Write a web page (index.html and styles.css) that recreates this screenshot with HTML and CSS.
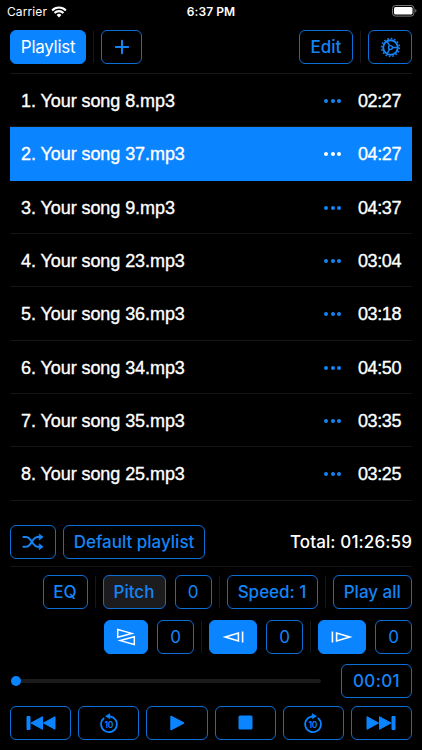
FILE: index.html
```html
<!DOCTYPE html>
<html lang="en">
<head>
<meta charset="utf-8">
<meta name="viewport" content="width=device-width, initial-scale=1">
<title>Playlist</title>
<link rel="stylesheet" href="styles.css">
</head>
<body>
<main class="app">
  <header class="status">
    <span class="carrier">Carrier
      <svg class="wifi" width="16" height="12" viewBox="0 0 16 12" fill="none" stroke="#fff" stroke-width="2.1"><path d="M1.1 4.4a9.8 9.8 0 0 1 13.8 0M3.5 7a6.4 6.4 0 0 1 9 0"/><path d="M8 11.4 5.6 8.9a3.5 3.5 0 0 1 4.8 0z" fill="#fff" stroke="none"/></svg>
    </span>
    <span class="clock">6:37 PM</span>
    <svg class="battery" width="25" height="12" viewBox="0 0 25 12"><rect x=".5" y=".5" width="21.5" height="10.6" rx="3" fill="none" stroke="#777"/><rect x="2" y="2" width="18.5" height="7.6" rx="1.6" fill="#fff"/><path d="M23.2 4.1v3.4q1.3-.5 1.3-1.7t-1.3-1.7z" fill="#777"/></svg>
  </header>

  <nav class="toolbar">
    <button class="btn solid w-playlist">Playlist</button>
    <i class="sep"></i>
    <button class="btn w-add" aria-label="Add"><svg width="16" height="16" viewBox="0 0 16 16" fill="none" stroke="currentColor" stroke-width="2" stroke-linecap="round"><path d="M8 1.800v12.400M1.800 8h12.400"/></svg></button>
    <span class="grow"></span>
    <button class="btn w-edit">Edit</button>
    <i class="sep"></i>
    <button class="btn w-gear" aria-label="Settings"><svg width="21" height="21" viewBox="0 0 21 21" fill="none" stroke="currentColor"><circle cx="10.500" cy="10.500" r="7.300" stroke-width="1.900"/><circle cx="10.500" cy="10.500" r="8.900" stroke-width="1.500" stroke-dasharray="1.600 1.895"/><circle cx="10.500" cy="10.500" r="1.900" stroke-width="1.400"/><path d="M12.500 10.500h5.300M9.500 8.700 6.900 4.200M9.500 12.300l-2.600 4.500" stroke-width="1.500"/></svg></button>
  </nav>

  <ul class="songs">
    <li><span class="name">1. Your song 8.mp3</span><span class="dots"><i></i><i></i><i></i></span><time>02:27</time></li>
    <li class="current"><span class="name">2. Your song 37.mp3</span><span class="dots"><i></i><i></i><i></i></span><time>04:27</time></li>
    <li><span class="name">3. Your song 9.mp3</span><span class="dots"><i></i><i></i><i></i></span><time>04:37</time></li>
    <li><span class="name">4. Your song 23.mp3</span><span class="dots"><i></i><i></i><i></i></span><time>03:04</time></li>
    <li><span class="name">5. Your song 36.mp3</span><span class="dots"><i></i><i></i><i></i></span><time>03:18</time></li>
    <li><span class="name">6. Your song 34.mp3</span><span class="dots"><i></i><i></i><i></i></span><time>04:50</time></li>
    <li><span class="name">7. Your song 35.mp3</span><span class="dots"><i></i><i></i><i></i></span><time>03:35</time></li>
    <li><span class="name">8. Your song 25.mp3</span><span class="dots"><i></i><i></i><i></i></span><time>03:25</time></li>
  </ul>

  <section class="summary">
    <button class="btn w-shuffle" aria-label="Shuffle"><svg width="22" height="18" viewBox="0 0 22 18" fill="none" stroke="currentColor" stroke-width="2" stroke-linecap="round" stroke-linejoin="round"><path d="M1.4 4h2.8c1.8 0 2.8.8 3.9 2.300l3.500 5c1.100 1.500 2.100 2.500 3.900 2.500h2M1.400 13.800h2.800c1.800 0 2.800-1 3.900-2.500l3.500-5C12.700 4.800 13.700 4 15.500 4h2"/><path d="m17.500 1.300 3.500 2.700-3.500 2.700zM17.500 11.100l3.500 2.700-3.500 2.700z" fill="currentColor" stroke-width=".8"/></svg></button>
    <button class="btn w-default">Default playlist</button>
    <span class="total">Total: 01:26:59</span>
  </section>

  <section class="modes">
    <button class="btn w-eq">EQ</button>
    <i class="sep"></i>
    <button class="btn w-pitch dim">Pitch</button>
    <button class="btn num">0</button>
    <i class="sep"></i>
    <button class="btn w-speed">Speed: 1</button>
    <i class="sep"></i>
    <button class="btn w-all">Play all</button>
  </section>

  <section class="fades">
    <button class="btn solid w-cross" aria-label="Crossfade"><svg width="20" height="20" viewBox="0 0 20 20" fill="none" stroke="#fff" stroke-width="1.500"><path d="M1.700 2.500v7.800L15.800 6.400zM18.300 9.700v7.800L4.200 13.600z"/></svg></button>
    <button class="btn num">0</button>
    <i class="sep"></i>
    <button class="btn solid w-fade" aria-label="Fade in"><svg width="24" height="12" viewBox="0 0 24 12" fill="none" stroke="#fff" stroke-width="1.600"><path d="M4.200 6l13.200-3.900v7.800zM21.600.500v11"/></svg></button>
    <button class="btn num">0</button>
    <i class="sep"></i>
    <button class="btn solid w-fade" aria-label="Fade out"><svg width="24" height="12" viewBox="0 0 24 12" fill="none" stroke="#fff" stroke-width="1.600"><path d="M19.800 6 6.600 2.100v7.800zM2.400.500v11"/></svg></button>
    <button class="btn num">0</button>
  </section>

  <section class="progress">
    <div class="track"><span class="knob"></span></div>
    <button class="btn w-time">00:01</button>
  </section>

  <footer class="controls">
    <button class="btn" aria-label="Previous"><svg width="30" height="16" viewBox="0 0 30 16" fill="currentColor" stroke="currentColor" stroke-linejoin="round"><path d="M1 1.500h3v13H1zM5 8l11.500-6.300v12.600zM17.500 8 29 1.700v12.600z"/></svg></button>
    <button class="btn" aria-label="Back 10 seconds"><svg width="20" height="22" viewBox="0 0 20 22" fill="none" stroke="currentColor"><path d="M10 4.300A7.900 7.900 0 1 1 4.700 6.300" stroke-width="1.700" stroke-linecap="round"/><path d="M10.800 1.600v5.200L6.500 4.200z" fill="currentColor" stroke-width=".500" stroke-linejoin="round"/><text x="9.800" y="15.500" class="ten">10</text></svg></button>
    <button class="btn" aria-label="Play"><svg width="16" height="16" viewBox="0 0 16 16" fill="currentColor" stroke="currentColor" stroke-width="1.500" stroke-linejoin="round"><path d="M2 1.500v13L14.500 8z"/></svg></button>
    <button class="btn" aria-label="Stop"><svg width="15" height="15" viewBox="0 0 15 15" fill="currentColor"><rect x=".5" y=".5" width="14" height="14" rx="1.500"/></svg></button>
    <button class="btn" aria-label="Forward 10 seconds"><svg width="20" height="22" viewBox="0 0 20 22" fill="none" stroke="currentColor"><path d="M10 4.300A7.900 7.900 0 1 0 15.300 6.300" stroke-width="1.700" stroke-linecap="round"/><path d="M9.200 1.600v5.200l4.300-2.600z" fill="currentColor" stroke-width=".500" stroke-linejoin="round"/><text x="9.800" y="15.500" class="ten">10</text></svg></button>
    <button class="btn" aria-label="Next"><svg width="30" height="16" viewBox="0 0 30 16" fill="currentColor" stroke="currentColor" stroke-linejoin="round"><path d="M26 1.500h3v13h-3zM25 8 13.500 1.700v12.600zM12.500 8 1 1.700v12.600z"/></svg></button>
  </footer>
</main>
</body>
</html>
```
FILE: styles.css
```css
* { box-sizing: border-box; }
body { margin: 0; background: #000; color: #fff; font-family: Inter, sans-serif; }
.app { width: 422px; height: 750px; padding: 0 10px; overflow: hidden; }
svg { display: block; flex: none; }

.status { height: 30px; margin: 0 -3px; padding-top: 1px; display: grid; grid-template-columns: 1fr auto 1fr; align-items: start; font-size: 12px; line-height: 21px; }
.carrier { display: flex; align-items: center; gap: 4px; letter-spacing: .1px; }
.clock { font-weight: 600; letter-spacing: .1px; }
.battery { justify-self: end; margin: 4px -2px 0 0; }

.btn { height: 34px; flex: none; padding: 0; display: flex; align-items: center; justify-content: center; border: 1px solid #0b6fd6; border-radius: 6px; background: #000; color: #1684f5; font: 500 17px Inter, sans-serif; white-space: nowrap; }
.solid { background: #0a84ff; border-color: #0a84ff; color: #fff; }
.dim { background: #1c1c1e; }
.sep { width: 1px; height: 32px; flex: none; background: #17171a; }
.grow { flex: 1; }

.toolbar { height: 43px; display: flex; align-items: flex-start; gap: 7px; }
.toolbar .sep { margin-top: 1px; }
.w-playlist { width: 76px; font-weight: 400; letter-spacing: -.3px; }
.w-add { width: 41px; }
.w-edit { width: 54px; }
.w-gear { width: 44px; }

.songs { list-style: none; height: 427.500px; margin: 0; padding: 0; border-top: 1px solid #171719; display: grid; grid-template-rows: repeat(8, 1fr); }
.songs li { display: flex; align-items: center; padding: 3px 11px 0; border-bottom: 1px solid #151517; font: 18px "Liberation Sans", sans-serif; -webkit-text-stroke: .35px #fff; }
.songs .current { background: #0a84ff; border-color: #0a84ff; }
.name { flex: 1; letter-spacing: -.07px; }
.songs time { letter-spacing: -.4px; }
.dots { display: flex; gap: 2.400px; margin: -1px 17px 0 0; }
.dots i { width: 4px; height: 4px; border-radius: 50%; background: #1684f5; }
.current .dots i { background: #fff; }

.summary { height: 66px; padding-top: 24px; display: flex; gap: 7px; border-bottom: 1px solid #151517; }
.w-shuffle { width: 46px; }
.w-default { width: 142px; }
.total { margin-left: auto; line-height: 34px; font-size: 17px; font-weight: 500; letter-spacing: .12px; }

.modes, .fades { display: flex; align-items: center; justify-content: flex-end; gap: 7px; }
.modes { height: 34px; margin-top: 8px; }
.w-eq { width: 45px; }
.w-pitch { width: 63px; margin-right: 2px; }
.num { width: 37px; font-weight: 400; }
.w-speed { width: 91px; }
.w-all { width: 79.500px; }

.fades { height: 34px; margin-top: 11px; }
.w-cross { width: 44px; margin-right: 2px; }
.w-fade { width: 48px; margin-right: 2px; }

.progress { height: 34px; margin-top: 10px; display: flex; align-items: center; justify-content: space-between; }
.track { width: 309px; height: 4px; margin-left: 2px; border-radius: 2px; background: #1b1b1d; display: flex; align-items: center; }
.knob { width: 10px; height: 10px; flex: none; margin-left: -1px; border-radius: 50%; background: #0a84ff; }
.w-time { width: 71px; letter-spacing: .4px; }

.controls { margin-top: 8px; display: grid; grid-template-columns: repeat(6, 1fr); gap: 7px; }
.controls .btn { color: #0a84ff; }
.ten { font: 600 8.500px Inter, sans-serif; fill: currentColor; stroke: none; text-anchor: middle; letter-spacing: -.2px; }
```
